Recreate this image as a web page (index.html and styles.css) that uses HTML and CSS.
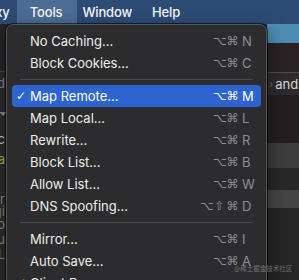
FILE: index.html
```html
<!DOCTYPE html>
<html lang="en">
<head>
<meta charset="utf-8">
<link rel="stylesheet" href="styles.css">
</head>
<body>
<div class="screen">
  <header class="menubar">
    <span class="mb-item mb-first">Proxy</span>
    <span class="mb-item active">Tools</span>
    <span class="mb-item">Window</span>
    <span class="mb-item">Help</span>
  </header>
  <div class="app">
    <div class="left-col">
      <div class="lc-top"></div>
      <div class="lc-row lc-h22 dim">Upload and</div>
      <div class="lc-row lc-h35 tri"><span class="tri-mark"></span></div>
      <div class="lc-row lc-h20 light">abc</div>
      <div class="lc-row lc-h20 green">data</div>
      <div class="lc-row lc-h24"></div>
      <div class="lc-row lc-h12 dim">err</div>
      <div class="lc-row lc-h12 dim">logi</div>
      <div class="lc-row lc-h14 dim">ap</div>
      <div class="lc-row lc-h16 dim">mu</div>
      <div class="lc-row lc-h14 dim">L</div>
    </div>
    <div class="center"></div>
    <div class="right-col">
      <div class="rc-band rc-blue"></div>
      <div class="rc-band rc-dark1"></div>
      <div class="rc-band rc-line"></div>
      <div class="rc-band rc-and"><span class="chev">›</span><span>and</span></div>
      <div class="rc-band rc-dark2"></div>
      <div class="rc-band rc-gray1"></div>
      <div class="rc-band rc-dark3"></div>
      <div class="rc-band rc-gray2"></div>
      <div class="rc-band rc-dark4"></div>
    </div>
  </div>

  <div class="menu">
    <div class="row"><span class="check"></span><span class="label">No Caching…</span><span class="sc"><span class="mod">⌥</span><span class="mod">⌘</span><span class="key">N</span></span></div>
    <div class="row"><span class="check"></span><span class="label">Block Cookies…</span><span class="sc"><span class="mod">⌥</span><span class="mod">⌘</span><span class="key">C</span></span></div>
    <div class="sep"></div>
    <div class="row selected"><span class="check">✓</span><span class="label">Map Remote…</span><span class="sc"><span class="mod">⌥</span><span class="mod">⌘</span><span class="key">M</span></span></div>
    <div class="row"><span class="check"></span><span class="label">Map Local…</span><span class="sc"><span class="mod">⌥</span><span class="mod">⌘</span><span class="key">L</span></span></div>
    <div class="row"><span class="check"></span><span class="label">Rewrite…</span><span class="sc"><span class="mod">⌥</span><span class="mod">⌘</span><span class="key">R</span></span></div>
    <div class="row"><span class="check"></span><span class="label">Block List…</span><span class="sc"><span class="mod">⌥</span><span class="mod">⌘</span><span class="key">B</span></span></div>
    <div class="row"><span class="check"></span><span class="label">Allow List…</span><span class="sc"><span class="mod">⌥</span><span class="mod">⌘</span><span class="key">W</span></span></div>
    <div class="row"><span class="check"></span><span class="label">DNS Spoofing…</span><span class="sc"><span class="mod">⌥</span><span class="mod">⇧</span><span class="mod">⌘</span><span class="key">D</span></span></div>
    <div class="sep"></div>
    <div class="row"><span class="check"></span><span class="label">Mirror…</span><span class="sc"><span class="mod">⌥</span><span class="mod">⌘</span><span class="key">I</span></span></div>
    <div class="row"><span class="check"></span><span class="label">Auto Save…</span><span class="sc"><span class="mod">⌥</span><span class="mod">⌘</span><span class="key">A</span></span></div>
    <div class="row"><span class="check">✓</span><span class="label">Client Process</span><span class="sc"></span></div>
  </div>

  <div class="watermark">@稀土掘金技术社区</div>
</div>
</body>
</html>
```

FILE: styles.css
```css
* { box-sizing: border-box; }

html, body {
  margin: 0;
  padding: 0;
  background: #262626;
}

.screen {
  position: relative;
  width: 299px;
  height: 280px;
  overflow: hidden;
  font-family: Inter, "Noto Sans", "DejaVu Sans", sans-serif;
  color: #ececec;
}

/* ---------- menu bar ---------- */
.menubar {
  height: 24px;
  display: flex;
  align-items: stretch;
  background: #2c4b75;
  font-size: 13px;
  font-weight: 500;
  letter-spacing: -0.15px;
  white-space: nowrap;
  color: #f4f6f9;
}

.mb-item {
  display: flex;
  align-items: center;
  padding: 0 10px;
  flex: none;
}

.mb-first {
  margin-left: -35px;
}

.mb-item.active {
  background: #4c6c95;
  padding: 0 15px 0 13px;
  margin: 0 -5px 0 -3px;
}

/* ---------- background app ---------- */
.app {
  display: flex;
  height: 256px;
}

.left-col {
  width: 6px;
  flex: none;
  display: flex;
  flex-direction: column;
  background: #2c2c2c;
  overflow: hidden;
  font-size: 13px;
}

.lc-top {
  height: 48px;
  flex: none;
  background: #2a2427;
  border-bottom: 1px solid #4a4a4a;
}

.lc-row {
  flex: none;
  display: flex;
  justify-content: flex-end;
  align-items: center;
  white-space: nowrap;
  padding-right: 1px;
}

.lc-h12 { height: 12px; }
.lc-h14 { height: 14px; }
.lc-h16 { height: 16px; }
.lc-h20 { height: 20px; }
.lc-h22 { height: 22px; }
.lc-h24 { height: 24px; }
.lc-h35 { height: 35px; align-items: flex-start; padding-top: 18px; }

.dim { color: #8a8a8a; }
.light { color: #cfcfcf; }
.green { color: #a8b94c; }

.tri-mark {
  width: 0;
  height: 0;
  border-left: 4px solid transparent;
  border-right: 4px solid transparent;
  border-top: 4px solid #8a8a8a;
  margin-right: -2px;
}

.center {
  flex: 1;
  background: #2b2b2b;
}

.right-col {
  width: 32px;
  flex: none;
  display: flex;
  flex-direction: column;
  font-size: 13px;
}

.rc-band { flex: none; }
.rc-blue { height: 19px; background: #4d8db1; }
.rc-dark1 { height: 29px; background: #2a2326; }
.rc-line { height: 1px; background: #4d4d4d; }
.rc-and {
  height: 22px;
  background: #2d2b2d;
  display: flex;
  align-items: center;
  gap: 2px;
  padding-left: 2px;
  color: #d8d8d8;
  white-space: nowrap;
}
.chev { color: #6a6a6a; font-size: 11px; }
.rc-dark2 { height: 48px; background: #231f21; }
.rc-gray1 { height: 25px; background: #3d3d3d; }
.rc-dark3 { height: 22px; background: #272727; }
.rc-gray2 { height: 18px; background: #444444; }
.rc-dark4 { flex: 1; background: #262626; }

/* ---------- dropdown menu ---------- */
.menu {
  position: absolute;
  left: 6px;
  top: 24px;
  width: 261px;
  height: 280px;
  background: #2c2c2e;
  border: 1px solid #545456;
  border-radius: 7px;
  padding: 5px 5px;
  box-shadow: 0 0 0 1px rgba(0, 0, 0, 0.55), 0 6px 18px rgba(0, 0, 0, 0.5);
  font-size: 13px;
  display: flex;
  flex-direction: column;
}

.row {
  height: 22px;
  flex: none;
  display: flex;
  align-items: center;
  padding: 0 6px 0 4px;
  border-radius: 4px;
  color: #ececec;
  white-space: nowrap;
}

.row.selected {
  background: #2e63d2;
  color: #ffffff;
}

.check {
  width: 14px;
  flex: none;
  font-family: "DejaVu Sans", sans-serif;
  font-size: 12px;
}

.label {
  flex: 1;
}

.sc {
  display: flex;
  align-items: center;
  color: #8e8e92;
  font-family: "DejaVu Sans", sans-serif;
  font-size: 12px;
}

.row.selected .sc {
  color: #ffffff;
}

.mod {
  width: 13px;
  text-align: center;
}

.key {
  width: 16px;
  padding-left: 3px;
  font-family: Inter, "Noto Sans", sans-serif;
  font-size: 13px;
}

.sep {
  height: 11px;
  flex: none;
  display: flex;
  align-items: center;
  padding: 0 8px;
}

.sep::before {
  content: "";
  display: block;
  width: 100%;
  height: 1px;
  background: #4a4a4c;
}

/* ---------- watermark ---------- */
.watermark {
  position: absolute;
  left: 234px;
  top: 263px;
  font-family: "Noto Sans CJK SC", sans-serif;
  font-size: 6.5px;
  color: rgba(210, 210, 210, 0.45);
  white-space: nowrap;
}
```
